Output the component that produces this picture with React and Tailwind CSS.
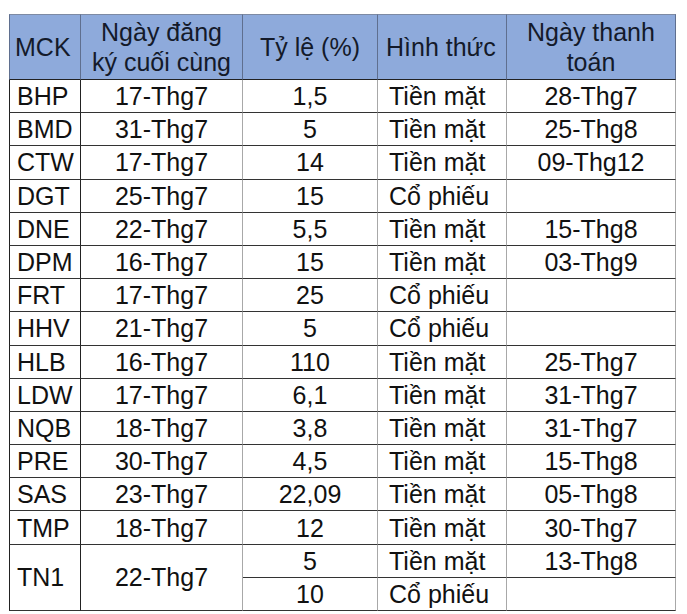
import React from 'react';

const rows = [
  ['BHP', '17-Thg7', '1,5', 'Tiền mặt', '28-Thg7'],
  ['BMD', '31-Thg7', '5', 'Tiền mặt', '25-Thg8'],
  ['CTW', '17-Thg7', '14', 'Tiền mặt', '09-Thg12'],
  ['DGT', '25-Thg7', '15', 'Cổ phiếu', ''],
  ['DNE', '22-Thg7', '5,5', 'Tiền mặt', '15-Thg8'],
  ['DPM', '16-Thg7', '15', 'Tiền mặt', '03-Thg9'],
  ['FRT', '17-Thg7', '25', 'Cổ phiếu', ''],
  ['HHV', '21-Thg7', '5', 'Cổ phiếu', ''],
  ['HLB', '16-Thg7', '110', 'Tiền mặt', '25-Thg7'],
  ['LDW', '17-Thg7', '6,1', 'Tiền mặt', '31-Thg7'],
  ['NQB', '18-Thg7', '3,8', 'Tiền mặt', '31-Thg7'],
  ['PRE', '30-Thg7', '4,5', 'Tiền mặt', '15-Thg8'],
  ['SAS', '23-Thg7', '22,09', 'Tiền mặt', '05-Thg8'],
  ['TMP', '18-Thg7', '12', 'Tiền mặt', '30-Thg7'],
];

// body cell styles
const base = 'p-0 align-middle leading-[26px]';
const c1 = `${base} border-l border-r border-b border-l-[#222] border-r-[#222] border-b-[#333] pl-[7px] text-left`;
const c2 = `${base} border-r border-b border-r-[#a8a8a8] border-b-[#333] text-center`;
const c4 = `${base} border-r border-b border-r-[#a8a8a8] border-b-[#333] pl-[11px] text-left`;

const th = 'p-0 border-r border-t border-b border-t-[#7d8aa3] border-r-[#5f6f8f] border-b-[#222] font-normal align-middle leading-[30px]';

export default function App() {
  return (
    <div className="min-h-screen bg-white pt-[14px] pl-[9px] font-['Liberation_Sans',Arial,sans-serif] text-[25px] text-[#111]">
      <table className="table-fixed border-separate border-spacing-0 w-[667px]">
        <colgroup>
          <col className="w-[72px]" />
          <col className="w-[162px]" />
          <col className="w-[135px]" />
          <col className="w-[129px]" />
          <col className="w-[169px]" />
        </colgroup>
        <thead>
          <tr className="h-[66px] bg-[#8eaadb] text-[#141a2a]">
            <th className={`${th} border-l border-l-[#5f6f8f] pl-[5px] text-left`}>MCK</th>
            <th className={`${th} text-center`}>Ngày đăng<br />ký cuối cùng</th>
            <th className={`${th} text-center`}>Tỷ lệ (%)</th>
            <th className={`${th} pl-[8px] text-left`}>Hình thức</th>
            <th className={`${th} text-center`}>Ngày thanh<br />toán</th>
          </tr>
        </thead>
        <tbody>
          {rows.map((r) => (
            <tr key={r[0]} className="h-[33.2px]">
              <td className={c1}>{r[0]}</td>
              <td className={c2}>{r[1]}</td>
              <td className={c2}>{r[2]}</td>
              <td className={c4}>{r[3]}</td>
              <td className={c2}>{r[4]}</td>
            </tr>
          ))}
          <tr className="h-[33.2px]">
            <td rowSpan={2} className={c1}>TN1</td>
            <td rowSpan={2} className={c2}>22-Thg7</td>
            <td className={c2}>5</td>
            <td className={c4}>Tiền mặt</td>
            <td className={c2}>13-Thg8</td>
          </tr>
          <tr className="h-[33.2px]">
            <td className={c2}>10</td>
            <td className={c4}>Cổ phiếu</td>
            <td className={c2}></td>
          </tr>
        </tbody>
      </table>
    </div>
  );
}
